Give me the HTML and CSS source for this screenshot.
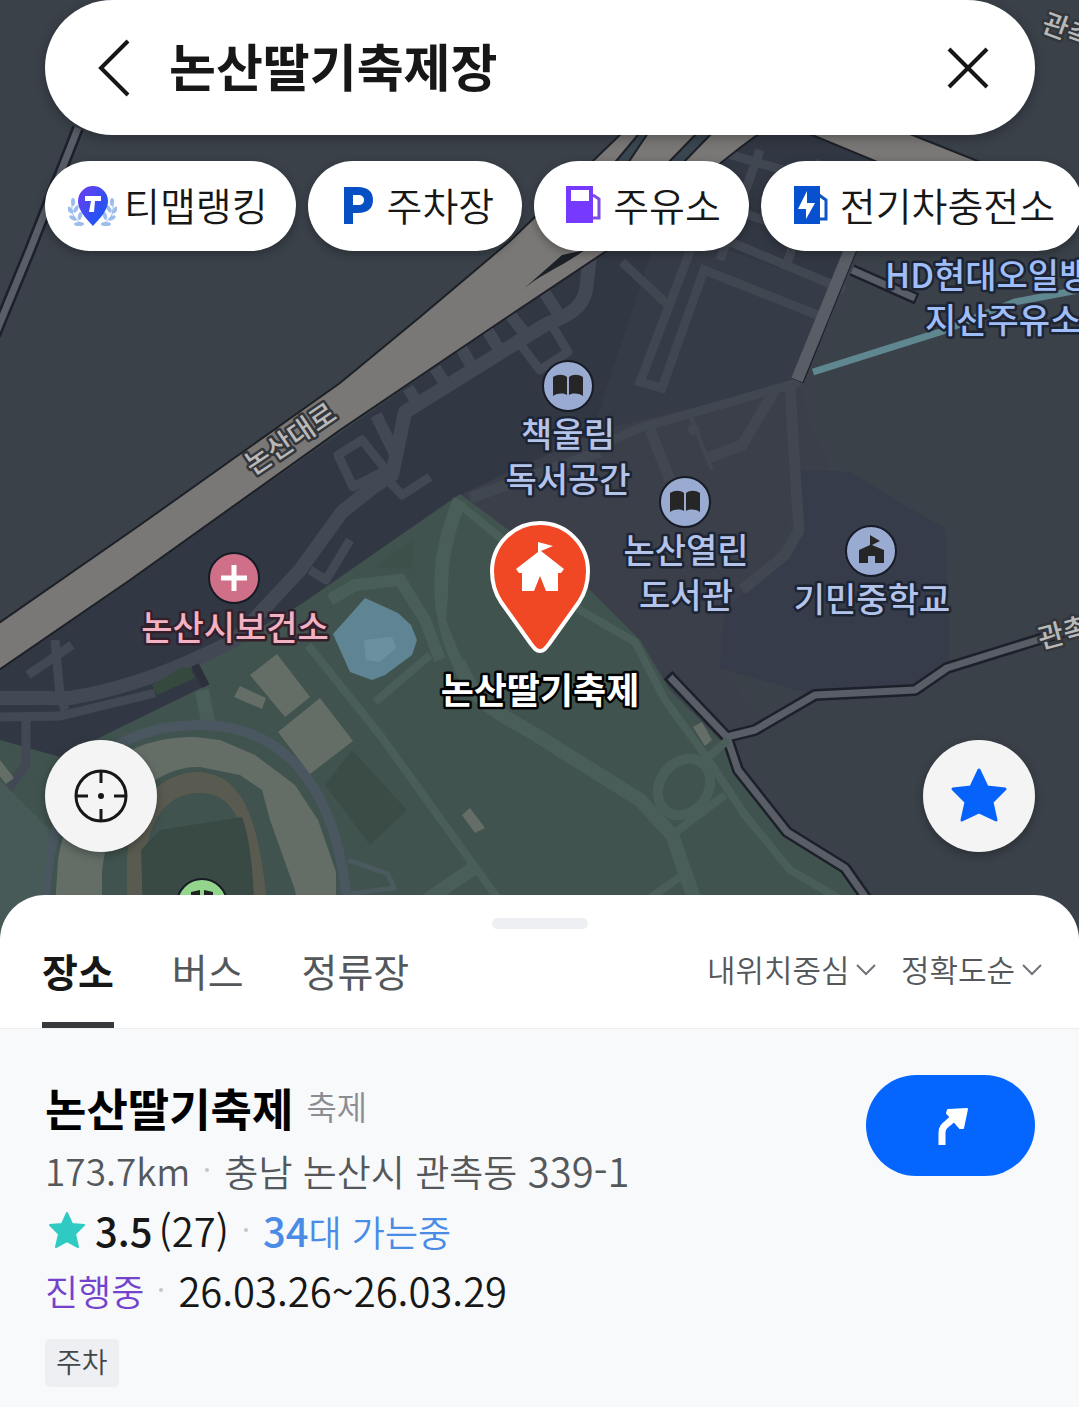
FILE: index.html
```html
<!DOCTYPE html>
<html lang="ko">
<head>
<meta charset="utf-8">
<meta name="viewport" content="width=device-width, initial-scale=1">
<title>논산딸기축제장</title>
<link rel="stylesheet" href="styles.css">
</head>
<body>
<div class="app">
  <main class="map">
    <svg class="map-canvas" viewBox="0 0 1079 940" preserveAspectRatio="xMidYMin slice" role="img" aria-label="지도">
      <rect width="1079" height="940" fill="#3a4149"/>
      <!-- districts -->
      <path d="M0 670 500 322 750 130 825 130 880 165 845 260 800 385 600 460 460 495 300 610 210 690 60 760 0 745Z" fill="#323843"/>
      <path d="M660 225 700 240 840 290 800 380 650 440 590 440Z" fill="#363c47"/>
      <path d="M460 495 600 430 800 382 808 420 830 470 800 500 720 665 760 720 727 738Z" fill="#3a3f4a"/>
      <path d="M799 470 850 472 895 500 945 528 950 665 915 688 815 695 720 668 725 610 795 545Z" fill="#363c49"/>
      <path d="M460 494 590 590 640 640 670 690 725 745 738 778 788 838 845 872 875 915V940H0V740L60 757 205 686 195 665 300 605Z" fill="#41534e"/>

      <!-- residential streets -->
      <g fill="none" stroke="#424954" stroke-width="12" stroke-linejoin="round">
        <path d="M590 255 586 290C582 312 560 318 545 325L405 412 392 475 372 488 342 512 300 570 235 640C180 668 130 688 70 698H0" stroke-width="14"/>
        <path d="M545 293 562 320M508 312 530 340M486 328 502 354M460 346 474 370M435 368 448 388M408 388 420 408M376 415 398 460" />
        <path d="M520 344 540 370 568 352 550 322M338 455 362 440 386 470 353 487ZM386 478 402 495 430 477M310 570 326 580 350 540" stroke-width="9"/>
        <path d="M0 717 60 716 155 693M58 690 65 710M55 640 60 695M28 675 72 645M26 720V765L0 800" stroke-width="9"/>
      </g>
      <g fill="none" stroke="#414751" stroke-width="12">
        <path d="M700 225 640 382 662 388 704 270 830 320M622 262 668 305M590 450 640 428 800 382" stroke-width="9"/>
        <path d="M790 385 795 470 799 530 785 555 742 590M775 390 742 445 708 458M650 430 670 480M470 498 600 452" stroke-width="11"/>
        <path d="M690 415 712 470" stroke-width="4"/><circle cx="694" cy="430" r="6" fill="#414751" stroke="none"/>
        <path d="M715 150 850 190M690 225 845 290M720 205 850 250M760 150 720 260M820 160 785 270" stroke-width="9"/>
      </g>

      <!-- main road -->
      <g fill="#7a7876" stroke="#1d2127" stroke-width="2">
        <path d="M-4 625 140 525 340 383 420 317 510 241 625 130H765C735 148 705 180 605 252L500 322 340 430 130 580-4 672Z"/>
        <path d="M800 130 880 163 876 178 1020 178 900 130Z"/>
        <path d="M665 166 700 130H715L680 166ZM612 166 642 130H650L626 166Z" fill="#3a4650"/>
        <path d="M519 293C538 275 560 268 585 250L562 255Z" fill="#1d2127" stroke="none"/>
      </g>

      <!-- minor roads and stream -->
      <g fill="none" stroke-linejoin="bevel">
        <path d="M813 372 940 332 1015 302 1079 290" stroke="#5f8790" stroke-width="7"/>
        <path d="M668 675 727 737 738 770 787 832 845 868 878 915M727 737 755 730 815 695 915 690 947 668 1079 627M78 128 30 250-5 335M852 270 917 299M855 240 798 381" stroke="#1c202b" stroke-width="12"/>
        <path d="M670 677 727 737 738 770 787 832 845 868 878 915M727 737 755 730 815 695 915 690 947 668 1079 627M78 128 30 250-5 335M852 270 915 298" stroke="#595d65" stroke-width="7"/>
        <path d="M854 240 797 380" stroke="#595d65" stroke-width="12"/>
      </g>

      <!-- park -->
      <g fill="none" stroke="#4a5e59" stroke-width="10">
        <path d="M460 500C430 570 440 625 462 670S500 710 560 750L640 800 672 835 700 915" stroke-width="14"/>
        <path d="M460 505 540 570 580 610 635 642 665 700 705 755 745 815 790 870 850 905M308 645 380 735 470 860 510 915M375 702 430 655M672 835 725 795M640 905 690 870M705 760 728 740" stroke-width="8"/>
        <path d="M330 600 355 585 400 580 425 620 440 660" stroke-width="12"/>
        <ellipse cx="684" cy="787" rx="24" ry="30" transform="rotate(35 684 787)"/>
        <path d="M202 690 208 722M405 915 478 865" stroke-width="14"/>
      </g>
      <path d="M375 567 413 540 412 569Z" fill="#3d5049"/>
      <path d="M446 620C450 570 455 530 465 515L500 545V650L462 660Z" fill="#41534e"/>
      <path d="M333 634 350 615 365 598 398 613 411 625 417 640 412 655 385 675 372 680 350 672Z" fill="#5f8594"/>
      <path d="M364 640 392 637 396 648 380 662 366 660Z" fill="#6a919d"/>
      <path d="M152 685 180 668 190 667 195 678 157 695Z" fill="#35493f"/>
      <path d="M195 665 206 686" stroke="#2b303c" stroke-width="8"/>

      <!-- stadium and buildings -->
      <path d="M46 940C38 820 80 725 200 725S350 850 348 940" fill="none" stroke="#4a5760" stroke-width="10"/>
      <path d="M53 940 58 860C70 790 110 737 195 737L220 740 255 755 295 785 318 820 336 872V940H302L295 890 270 820 262 790 240 775 200 767C150 765 102 820 102 880V940Z" fill="#646e67"/>
      <path d="M127 940V860C130 810 155 772 200 772 245 776 262 820 270 940H255C252 850 245 793 200 793 150 793 137 850 144 940Z" fill="#5a5b50"/>
      <path d="M144 940 141 850 160 830 242 817C254 850 254 900 255 940Z" fill="#394943"/>
      <path d="M40 915 50 830 0 780V940Z" fill="#475a58"/>
      <path d="M348 860 388 874 394 888 350 894" fill="none" stroke="#4a5a5e" stroke-width="5"/>
      <g fill="#646e67">
        <path d="M250 675 277 654 310 697 285 717ZM240 686 266 698 262 709 234 697ZM278 732 320 698 353 741 310 774Z"/>
        <path d="M462 815 470 808 485 828 475 833ZM693 727 702 722 712 740 705 746ZM0 760 14 778 6 784-2 774Z"/>
      </g>
      <path d="M352 750 407 810 370 845 325 785Z" fill="#3b4c47"/>

      <!-- points of interest -->
      <g stroke="#171b26" stroke-width="2">
        <circle cx="568" cy="386" r="25" fill="#9aabd1"/>
        <circle cx="685" cy="502" r="25" fill="#9aabd1"/>
        <circle cx="871" cy="551" r="25" fill="#9aabd1"/>
        <circle cx="234" cy="578" r="25" fill="#cf7088"/>
        <circle cx="202" cy="904" r="25" fill="#93d58c"/>
      </g>
      <path d="M234 565V591M221 578H247" stroke="#fff" stroke-width="5"/>
      <path d="M191 892 200 890V900H191ZM204 890 213 892V900H204Z" fill="#222"/>
      <g id="book" fill="#262626">
        <path d="M553 377C558 374 563 374 567 377V395C563 393 558 393 553 396ZM569 377C573 374 578 374 583 377V396C578 393 573 393 569 395Z"/>
      </g>
      <use href="#book" x="117" y="116"/>
      <path d="M859 563V550L870 545V535L880 541 872 545 884 550V563H875V556H868V563Z" fill="#262626"/>

      <g class="labels labels--blue">
        <text x="568" y="447">책울림</text>
        <text x="568" y="492">독서공간</text>
        <text x="686" y="563">논산열린</text>
        <text x="686" y="608">도서관</text>
        <text x="872" y="612">기민중학교</text>
      </g>
      <g class="labels labels--fuel">
        <text class="from-start" x="885" y="288">HD현대오일뱅크</text>
        <text class="from-start" x="925" y="333">지산주유소</text>
      </g>
      <text class="labels labels--pink" x="235" y="640">논산시보건소</text>
      <g class="labels labels--road">
        <text transform="translate(296 447) rotate(-34)">논산대로</text>
        <text class="from-start" transform="translate(1040 31) rotate(20)">관촉로</text>
        <text class="from-start" transform="translate(1041 649) rotate(-15)">관촉로</text>
      </g>

      <!-- selected place -->
      <path d="M540 651C536 651 534 648 531 644L501 602C495 593 492 584 492 571A48 48 0 0 1 588 571C588 584 585 593 579 602L549 644C546 648 544 651 540 651Z" fill="#f04825" stroke="#fff" stroke-width="4"/>
      <path d="M538 542 553 546 541 551 564 569 561 573H558V591H546L540 576 534 591H522V573H519L516 569 538 552Z" fill="#fff"/>
      <text class="labels labels--selected" x="540" y="704">논산딸기축제</text>
    </svg>

    <form class="search" role="search">
      <button class="search-btn" type="button" aria-label="뒤로">
        <svg width="40" height="60" viewBox="0 0 40 60"><path d="M35 3 8 30 35 57" fill="none" stroke="#171717" stroke-width="4"/></svg>
      </button>
      <input class="search-input" type="text" value="논산딸기축제장" aria-label="장소 검색">
      <button class="search-btn" type="button" aria-label="지우기">
        <svg width="44" height="44" viewBox="0 0 44 44"><path d="M3 3 41 41M41 3 3 41" fill="none" stroke="#171717" stroke-width="4"/></svg>
      </button>
    </form>

    <nav class="chips" aria-label="주변 검색">
      <button class="chip" type="button">
        <svg class="chip-icon" viewBox="0 0 49 44">
          <defs><linearGradient id="rank" x1="0" x2="1" y1="0" y2="1"><stop offset="0" stop-color="#6f3df0"/><stop offset="1" stop-color="#0a5cf5"/></linearGradient></defs>
          <g id="laurel" fill="#9dbdec"><path d="M16 40C8 38 3 31 4 21" fill="none" stroke="#9dbdec" stroke-width="1"/><ellipse cx="5" cy="18" rx="2" ry="4"/><ellipse cx="2" cy="26" rx="2" ry="4" transform="rotate(-35 2 26)"/><ellipse cx="8" cy="25" rx="2" ry="4" transform="rotate(30 8 25)"/><ellipse cx="5" cy="34" rx="2" ry="4" transform="rotate(-60 5 34)"/><ellipse cx="12" cy="32" rx="2" ry="4" transform="rotate(15 12 32)"/><ellipse cx="11" cy="40" rx="5" ry="2"/></g>
          <use href="#laurel" transform="matrix(-1 0 0 1 49 0)"/>
          <path d="M25 42C22 38 10 28 10 17A15 15 0 0 1 40 17C40 28 28 38 25 42Z" fill="url(#rank)"/>
          <path d="M17 12H33V17H27L26 28H21L23 17H17Z" fill="#fff"/>
        </svg><span>티맵랭킹</span></button>
      <button class="chip" type="button">
        <svg class="chip-icon" viewBox="0 0 49 44"><path fill="#0750c4" fill-rule="evenodd" d="M13 3H27C37 3 42 8 42 16S37 29 27 29H22V40H13ZM22 11V21H27C31 21 33 19 33 16S31 11 27 11Z"/></svg><span>주차장</span></button>
      <button class="chip" type="button">
        <svg class="chip-icon" viewBox="0 0 49 44"><path d="M36 11 42 15V34H36" fill="none" stroke="#7b4de0" stroke-width="3"/><path fill="#7639ff" fill-rule="evenodd" d="M9 2H36V39H9ZM14 6V17H32V6Z"/></svg><span>주유소</span></button>
      <button class="chip" type="button">
        <svg class="chip-icon" viewBox="0 0 49 44"><path d="M35 11 42 16V35H35" fill="none" stroke="#0d57c5" stroke-width="3"/><path fill="#0750d0" d="M10 2H36V40H10Z"/><path fill="#fff" d="M23 7 14 25H22V35L31 19H23Z"/></svg><span>전기차충전소</span></button>
    </nav>

    <div class="map-actions">
      <button class="fab" type="button" aria-label="현재 위치">
        <svg width="56" height="56" viewBox="0 0 56 56"><g fill="none" stroke="#171717" stroke-width="3"><circle cx="28" cy="28" r="25"/><path d="M28 3V15M28 41V53M3 28H15M41 28H53"/></g><circle cx="28" cy="28" r="3" fill="#171717"/></svg>
      </button>
      <button class="fab" type="button" aria-label="즐겨찾기">
        <svg width="58" height="56" viewBox="0 0 58 56"><path d="M29 2 37 19 55 21 42 34 46 52 29 44 12 52 16 34 3 21 21 19Z" fill="#0562fb" stroke="#0562fb" stroke-width="3" stroke-linejoin="round"/></svg>
      </button>
    </div>
  </main>

  <section class="sheet">
    <div class="handle"></div>
    <header class="sheet-head">
      <div class="tabs" role="tablist">
        <button class="tab tab--active" type="button" role="tab" aria-selected="true">장소</button>
        <button class="tab" type="button" role="tab" aria-selected="false">버스</button>
        <button class="tab" type="button" role="tab" aria-selected="false">정류장</button>
      </div>
      <div class="sorts">
        <label class="sort"><select aria-label="기준 위치"><option>내위치중심</option></select>
          <svg width="20" height="14" viewBox="0 0 20 14"><path d="M1 3 10 12 19 3" fill="none" stroke="#707378" stroke-width="2"/></svg></label>
        <label class="sort"><select aria-label="정렬"><option>정확도순</option></select>
          <svg width="20" height="14" viewBox="0 0 20 14"><path d="M1 3 10 12 19 3" fill="none" stroke="#707378" stroke-width="2"/></svg></label>
      </div>
    </header>

    <article class="place">
      <div class="place-info">
        <h1 class="place-name">논산딸기축제 <small>축제</small></h1>
        <p class="row row--muted"><span>173.7km</span><i class="dot"></i><span>충남 논산시 관촉동 <span class="num">339-1</span></span></p>
        <p class="row">
          <svg class="star" width="40" height="40" viewBox="0 0 40 40"><path d="M20 3 25 14 37 15 28 24 31 37 20 31 9 37 12 24 3 15 15 14Z" fill="#2fcbc3" stroke="#2fcbc3" stroke-width="2" stroke-linejoin="round"/></svg>
          <b class="num score">3.5</b><span class="num">(27)</span><i class="dot"></i><span class="going"><b class="num">34</b>대 가는중</span></p>
        <p class="row"><span class="status">진행중</span><i class="dot"></i><span class="num">26.03.26~26.03.29</span></p>
        <span class="badge">주차</span>
      </div>
      <button class="go" type="button" aria-label="길찾기">
        <svg width="40" height="44" viewBox="0 0 40 44"><path d="M11 41V29C11 24 13 22 17 19L25 12" fill="none" stroke="#fff" stroke-width="7"/><path d="M17 6 36 5 32 24 29 24 16 9Z" fill="#fff" stroke="#fff" stroke-width="2" stroke-linejoin="round"/></svg>
      </button>
    </article>
  </section>
</div>
</body>
</html>
```
FILE: styles.css
```css
* { box-sizing: border-box; }

body {
  margin: 0;
  font-family: "Noto Sans CJK KR", "Noto Sans", sans-serif;
  color: #171717;
  background: #f7f9fb;
}

button, input, select {
  margin: 0;
  padding: 0;
  border: 0;
  background: none;
  font: inherit;
  color: inherit;
}

svg { display: block; flex: none; }

.app {
  display: flex;
  flex-direction: column;
  min-height: 100vh;
  overflow: hidden;
}

/* Map */
.map {
  position: relative;
  flex: 1;
  display: flex;
  flex-direction: column;
  min-height: 600px;
  overflow: hidden;
  background: #3a4149;
}

.map-canvas {
  position: absolute;
  inset: 0;
  width: 100%;
  height: 100%;
}

.labels {
  font-size: 34px;
  font-weight: 500;
  text-anchor: middle;
  paint-order: stroke;
  stroke: #1d2433;
  stroke-width: 5px;
  stroke-linejoin: round;
}
.labels--blue { fill: #b3c3ea; }
.labels--fuel { fill: #9fbdf8; }
.labels--pink { fill: #f3b2c2; stroke: #33202c; }
.labels--road { fill: #b9b9b9; font-size: 28px; stroke: #33363a; }
.labels--selected { fill: #fff; font-size: 36px; font-weight: 700; stroke: #000; }
.from-start { text-anchor: start; }

.search {
  position: relative;
  display: flex;
  align-items: center;
  height: 135px;
  margin: 0 44px 0 45px;
  padding: 0 45px 0 48px;
  border-radius: 68px;
  background: #fff;
  box-shadow: 0 3px 12px rgba(0, 0, 0, .3);
}
.search-input {
  flex: 1;
  min-width: 0;
  height: 86px;
  margin-left: 36px;
  padding-bottom: 6px;
  font-size: 51px;
  font-weight: 700;
  outline: 0;
}

.chips {
  position: relative;
  display: flex;
  gap: 12px;
  padding: 26px 0 16px 45px;
  overflow: hidden;
}
.chip {
  flex: none;
  display: flex;
  align-items: center;
  gap: 7px;
  height: 90px;
  padding: 0 28px 0 23px;
  border-radius: 45px;
  background: #fff;
  box-shadow: 0 3px 10px rgba(0, 0, 0, .3);
  font-size: 39px;
  font-weight: 350;
}
.chip span { padding-bottom: 5px; }
.chip-icon { width: 49px; height: 44px; }

.map-actions {
  position: relative;
  display: flex;
  justify-content: space-between;
  margin-top: auto;
  padding: 0 44px 88px 45px;
}
.fab {
  display: grid;
  place-items: center;
  width: 112px;
  height: 112px;
  border-radius: 50%;
  background: #f4f4f4;
  box-shadow: 0 3px 10px rgba(0, 0, 0, .3);
}

/* Result sheet */
.sheet {
  position: relative;
  margin-top: -45px;
  border-radius: 45px 45px 0 0;
  overflow: hidden;
  background: #fff;
}
.handle {
  width: 96px;
  height: 11px;
  margin: 23px auto 0;
  border-radius: 6px;
  background: #edeff3;
}
.sheet-head {
  display: flex;
  justify-content: space-between;
  align-items: flex-start;
  padding: 16px 37px 0 42px;
  border-bottom: 1px solid #eceef0;
}
.tabs { display: flex; gap: 58px; }
.tab {
  height: 83px;
  padding-bottom: 26px;
  border-bottom: 6px solid transparent;
  font-size: 39px;
  line-height: 51px;
  color: #55585b;
}
.tab--active {
  border-color: #38393c;
  font-weight: 700;
  color: #171717;
}
.sorts { display: flex; gap: 25px; }
.sort {
  display: flex;
  align-items: center;
  gap: 6px;
  height: 48px;
  color: #55585b;
}
.sort select {
  appearance: none;
  font-size: 31px;
  font-weight: 350;
  line-height: 46px;
}

.place {
  display: flex;
  justify-content: space-between;
  align-items: flex-start;
  padding: 46px 44px 20px 45px;
  background: #f7f9fb;
}
.place-name {
  display: flex;
  align-items: center;
  gap: 13px;
  margin: 0;
  font-size: 45px;
  font-weight: 700;
  line-height: 65px;
  color: #000;
}
.place-name small {
  font-size: 33px;
  font-weight: 350;
  line-height: 56px;
  padding-bottom: 4px;
  color: #8a8d91;
}
.row {
  display: flex;
  align-items: center;
  height: 60px;
  margin: 0;
  font-size: 36px;
  font-weight: 350;
  line-height: 60px;
}
.row--muted { font-size: 37px; color: #55585b; }
.num { font-size: 40px; }
.row b { font-weight: 500; }
.star { margin: 0 8px 0 2px; }
.score { margin-right: 6px; }
.going { color: #4a8be6; }
.status { color: #7443cc; }
.dot {
  width: 4px;
  height: 4px;
  margin: 0 15px;
  border-radius: 50%;
  background: #c2c5c9;
}
.badge {
  display: inline-block;
  margin-top: 19px;
  padding: 0 11px 4px;
  border-radius: 5px;
  background: #eeeff2;
  font-size: 28px;
  font-weight: 350;
  line-height: 44px;
  color: #44474a;
  vertical-align: top;
}
.go {
  display: grid;
  place-items: center;
  width: 169px;
  height: 101px;
  border-radius: 51px;
  background: #0565ff;
}
```
